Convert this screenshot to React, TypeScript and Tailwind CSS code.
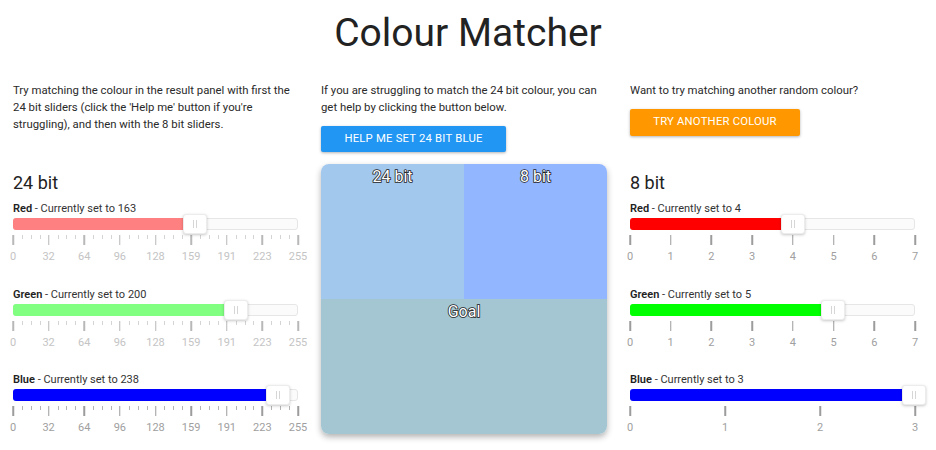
import React from 'react';

interface SliderProps {
  name: string;
  value: number;
  max: number;
  fill: string;
  labels: number[];
  minor?: boolean;
  faded?: boolean;
}

function Slider({ name, value, max, fill, labels, minor, faded }: SliderProps) {
  const pct = (value / max) * 100;
  const steps = labels.length - 1;
  const minorTicks: number[] = [];
  if (minor) {
    for (let i = 0; i <= steps * 4; i++) {
      if (i % 4 !== 0) minorTicks.push((i / (steps * 4)) * 100);
    }
  }
  const majorColor = faded ? 'bg-[#b8b8b8]' : 'bg-[#9c9c9c]';
  const minorColor = faded ? 'bg-[#d4d4d4]' : 'bg-[#b4b4b4]';
  const numColor = faded ? 'text-[#c4c4c4]' : 'text-[#a0a0a0]';

  return (
    <div>
      <p className="text-[11px] leading-[14px] text-[#333]">
        <span className="font-semibold text-[#222]">{name}</span> - Currently set to {value}
      </p>
      <div className="relative mt-[2px] h-3 rounded-[3px] border border-[#e6e6e6] bg-[#fbfbfb]">
        <div
          className="absolute -left-px -top-px -bottom-px rounded-l-[3px]"
          style={{ width: `${pct}%`, background: fill }}
        />
        <div
          className="absolute top-1/2 z-10 flex h-5 w-6 -translate-x-1/2 -translate-y-1/2 items-center justify-center gap-[2px] rounded-[3px] border border-[#ececec] bg-white shadow-[0_1px_3px_rgba(0,0,0,0.22)]"
          style={{ left: `${pct}%` }}
        >
          <span className="h-2 w-px bg-[#d6d6d6]" />
          <span className="h-2 w-px bg-[#d6d6d6]" />
        </div>
      </div>
      <div className="relative mt-[5px] h-[10px]">
        {minorTicks.map((p) => (
          <span key={p} className={`absolute top-0 h-[4px] w-px ${minorColor}`} style={{ left: `${p}%` }} />
        ))}
        {labels.map((l, i) => (
          <span
            key={l}
            className={`absolute top-0 h-[10px] w-[1.5px] -translate-x-1/2 ${majorColor}`}
            style={{ left: `${(i / steps) * 100}%` }}
          />
        ))}
      </div>
      <div className={`relative mt-[5px] h-[14px] text-[11px] leading-[14px] ${numColor}`}>
        {labels.map((l, i) => (
          <span key={l} className="absolute top-0 -translate-x-1/2" style={{ left: `${(i / steps) * 100}%` }}>
            {l}
          </span>
        ))}
      </div>
    </div>
  );
}

const bit24 = [0, 32, 64, 96, 128, 159, 191, 223, 255];
const outline = '[-webkit-text-stroke:1.6px_#222] [paint-order:stroke_fill]';

export default function App() {
  return (
    <div className="h-[450px] w-[936px] overflow-hidden bg-white font-['Roboto',sans-serif] text-[#212121]">
      <h1 className="pt-[9px] text-center text-[39px] leading-[48px] text-[#222]">Colour Matcher</h1>

      <div className="mt-[25px] grid grid-cols-[285px_286px_285px] gap-x-[23px] gap-y-[12px] pl-[13px]">
        {/* Row 1: descriptions */}
        <p className="text-[11.35px] leading-[17px] text-[#2a2a2a]">
          Try matching the colour in the result panel with first the 24 bit sliders (click the 'Help me' button if
          you're struggling), and then with the 8 bit sliders.
        </p>
        <div>
          <p className="text-[11.35px] leading-[17px] text-[#2a2a2a]">
            If you are struggling to match the 24 bit colour, you can get help by clicking the button below.
          </p>
          <button className="mt-[10px] h-[26px] w-[185px] rounded-[2px] bg-[#2196f3] text-[11.3px] tracking-[0.2px] text-white shadow-[0_1px_3px_rgba(0,0,0,0.3)]">
            HELP ME SET 24 BIT BLUE
          </button>
        </div>
        <div>
          <p className="text-[11.35px] leading-[17px] text-[#2a2a2a]">Want to try matching another random colour?</p>
          <button className="mt-[10px] h-[27px] w-[170px] rounded-[2px] bg-[#ff9800] text-[11.3px] tracking-[0.2px] text-white shadow-[0_1px_3px_rgba(0,0,0,0.3)]">
            TRY ANOTHER COLOUR
          </button>
        </div>

        {/* Row 2: 24 bit sliders */}
        <div>
          <h2 className="mt-[7px] mb-[7px] text-[18px] leading-[24px] text-[#222]">24 bit</h2>
          <div className="flex flex-col gap-[23.5px]">
            <Slider name="Red" value={163} max={255} fill="#ff8080" labels={bit24} minor faded />
            <Slider name="Green" value={200} max={255} fill="#80ff80" labels={bit24} minor faded />
            <Slider name="Blue" value={238} max={255} fill="#0000ff" labels={bit24} minor />
          </div>
        </div>

        {/* Result panel */}
        <div className="h-[270px] overflow-hidden rounded-lg shadow-[0_3px_6px_rgba(0,0,0,0.3)]">
          <div className="grid h-[135px] grid-cols-2">
            <div className={`bg-[#a3c8ee] pt-[3px] text-center text-[16px] leading-[20px] text-white ${outline}`}>
              24 bit
            </div>
            <div className={`bg-[#92b6ff] pt-[3px] text-center text-[16px] leading-[20px] text-white ${outline}`}>
              8 bit
            </div>
          </div>
          <div className={`h-[135px] bg-[#a3c6d2] pt-[3px] text-center text-[16px] leading-[20px] text-white ${outline}`}>
            Goal
          </div>
        </div>

        {/* 8 bit sliders */}
        <div>
          <h2 className="mt-[7px] mb-[7px] text-[18px] leading-[24px] text-[#222]">8 bit</h2>
          <div className="flex flex-col gap-[23.5px]">
            <Slider name="Red" value={4} max={7} fill="#ff0000" labels={[0, 1, 2, 3, 4, 5, 6, 7]} />
            <Slider name="Green" value={5} max={7} fill="#00ff00" labels={[0, 1, 2, 3, 4, 5, 6, 7]} />
            <Slider name="Blue" value={3} max={3} fill="#0000ff" labels={[0, 1, 2, 3]} />
          </div>
        </div>
      </div>
    </div>
  );
}
